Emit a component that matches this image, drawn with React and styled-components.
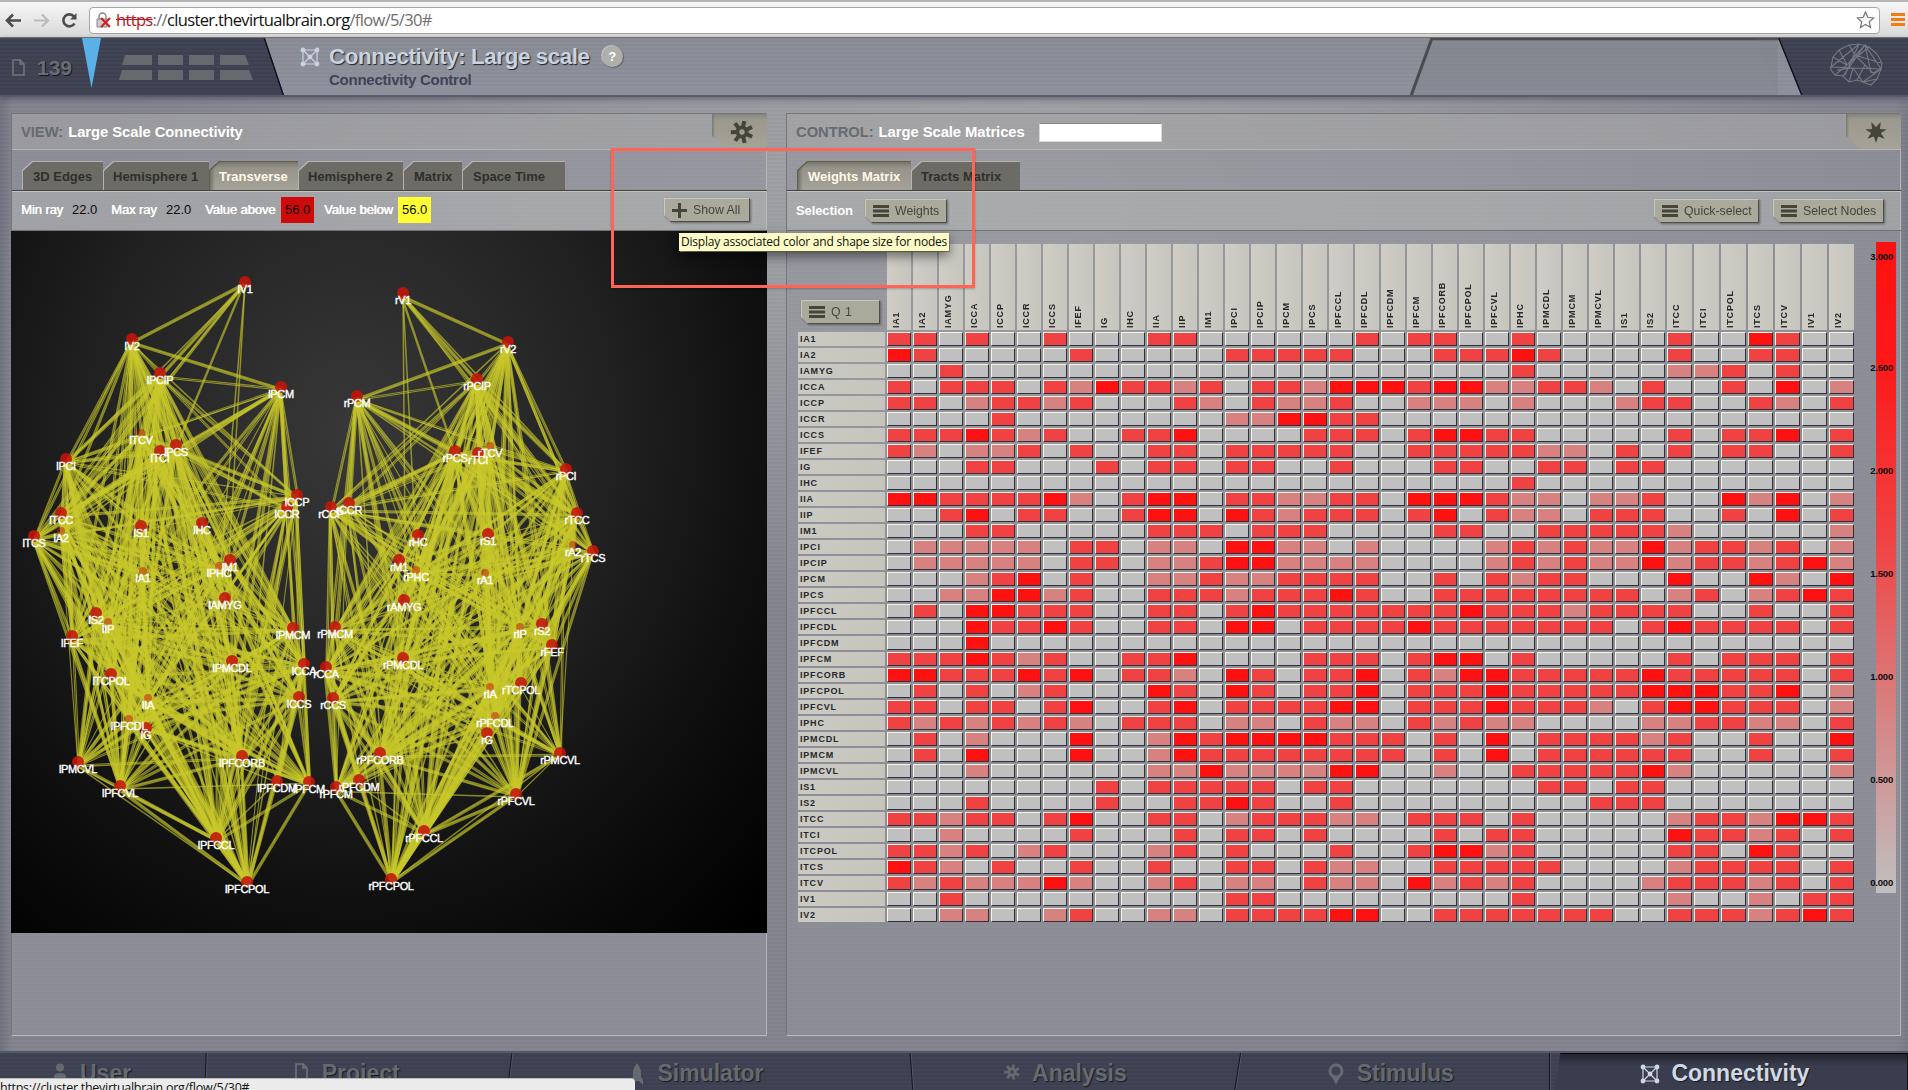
import React from "react";
import styled, { createGlobalStyle, css } from "styled-components";

const sans = '"Liberation Sans", Arial, sans-serif';
const lucida = '"Open Sans", "Noto Sans", sans-serif';
const stripes = "repeating-linear-gradient(180deg, rgba(255,255,255,.014) 0 2px, rgba(0,0,0,.014) 2px 4px)";
const darkFill = css`background: ${stripes}, #3e4152;`;

const Global = createGlobalStyle`
  * { box-sizing: border-box; }
  html, body { margin: 0; padding: 0; overflow: hidden; }
  body { font-family: ${sans}; background: #83848f; }
`;

/* ---------- data ---------- */

const NAMES = "A1 A2 AMYG CCA CCP CCR CCS FEF G HC IA IP M1 PCI PCIP PCM PCS PFCCL PFCDL PFCDM PFCM PFCORB PFCPOL PFCVL PHC PMCDL PMCM PMCVL S1 S2 TCC TCI TCPOL TCS TCV V1 V2".split(" ");

const WEIGHTS = [
  "2202002000220000002022002000002003200",
  "3200000200000222220002223200002002200",
  "0020000000000000000000002000001120200",
  "2022202132212022133323311221020020301",
  "2201221200021021120011101000122002102",
  "0000200000000113322000000000000000000",
  "2223212002230000222023322000002022302",
  "2101120200220222220022222110202022002",
  "0002200020220220020002200220220000000",
  "0000000000000000000000002000000000000",
  "3322223102330221122033321101120031301",
  "0023022002330321222023021102220020302",
  "0002200000222022200002200222221000001",
  "0111110220110331101000012121131221201",
  "0111110220112331111000012121131221231",
  "0001230200112112222002021220003003103",
  "0011331200222122232002222222201201232",
  "0203322200220232222222322212222002002",
  "0003223200220330222232222222023222202",
  "0003000000000000000000000000000000000",
  "2223212002230000222023302000002022202",
  "3322232302210320223021332222232222202",
  "0202012000320320223022232222233322301",
  "2202202300230222233022232221023322201",
  "2121212102220110211021211000011221102",
  "0201000300132333322202030222212002003",
  "0203000300132222222202030222222002002",
  "0001000000113111133001002222231000001",
  "0000000020222220220000000220220000000",
  "0002000020022320020000000002220000000",
  "2212202300220122211022202000001221332",
  "0010000200020220200002022000003221202",
  "2212012000120200020023312000002203200",
  "3210200200200220211002222200001222202",
  "2121113100120110211031212000012221202",
  "0020000000000220000000002000001001022",
  "0011001200110222233002222222002221232",
];

const LEVELS = ["#c0c0c0", "#d88181", "#f04242", "#ff1111"];

const LEFT = {
  V1: [245, 282], V2: [132, 339], PCIP: [160, 373], PCM: [281, 387], TCV: [141, 433], PCS: [176, 445],
  TCI: [160, 451], PCI: [66, 459], CCP: [297, 495], CCR: [287, 507], HC: [202, 523], TCC: [61, 513],
  S1: [141, 526], TCS: [34, 536], A2: [61, 531], M1: [230, 560], PHC: [219, 566], A1: [143, 571],
  AMYG: [225, 598], S2: [96, 613], IP: [108, 622], FEF: [72, 636], PMCM: [293, 628], PMCDL: [232, 661],
  CCA: [304, 664], TCPOL: [111, 674], IA: [148, 698], CCS: [299, 697], PFCDL: [129, 719], G: [146, 728],
  PFCORB: [242, 756], PMCVL: [78, 762], PFCVL: [120, 786], PFCDM: [277, 781], PFCM: [309, 782],
  PFCCL: [216, 838], PFCPOL: [247, 882],
};
const RIGHT = {
  V1: [403, 293], V2: [508, 342], PCIP: [477, 379], PCM: [357, 396], PCS: [455, 451], TCI: [478, 453],
  TCV: [490, 446], PCI: [566, 469], CCP: [331, 507], CCR: [349, 503], TCC: [577, 513], HC: [418, 535],
  S1: [488, 534], A2: [573, 545], TCS: [593, 551], M1: [399, 560], PHC: [416, 570], A1: [485, 573],
  AMYG: [404, 600], IP: [520, 627], S2: [542, 624], FEF: [552, 645], PMCM: [335, 627], PMCDL: [403, 658],
  CCA: [326, 667], TCPOL: [521, 683], IA: [490, 687], CCS: [333, 698], PFCDL: [495, 716], G: [487, 733],
  PFCORB: [380, 753], PMCVL: [560, 753], PFCVL: [516, 794], PFCDM: [359, 780], PFCM: [336, 787],
  PFCCL: [424, 831], PFCPOL: [391, 879],
};
const DEEP = ["A1", "IP", "IA", "PFCDL", "TCV", "PHC", "A2"];

/* ---------- browser chrome ---------- */

const Page = styled.div`
  position: relative;
  width: 1908px;
  height: 1090px;
  overflow: hidden;
  display: flex;
  flex-direction: column;
  background: ${stripes},
    linear-gradient(90deg, rgba(60,60,85,.25), rgba(0,0,0,0) 12px calc(100% - 12px), rgba(60,60,85,.12)),
    radial-gradient(ellipse 900px 420px at 1000px 200px, #a5a5a8 0%, #999aa0 40%, rgba(140,140,150,0) 100%),
    #82838d;
`;
const Chrome = styled.div`
  height: 38px;
  flex: none;
  display: flex;
  align-items: center;
  gap: 11px;
  padding: 3px 3px 2px 5px;
  border-top: 2px solid #b5b5b5;
  border-bottom: 1px solid #777;
  background: linear-gradient(#f6f6f6, #d9d9d9);
`;
const Address = styled.div`
  flex: 1;
  height: 27px;
  display: flex;
  align-items: center;
  padding: 0 4px 0 6px;
  background: #fff;
  border: 1px solid #a5a5a5;
  border-radius: 4px;
`;
const Url = styled.div`
  flex: 1;
  margin-left: 5px;
  font: 16.5px/24px ${lucida};
  letter-spacing: -.66px;
  color: #6e6e6e;
  white-space: pre;
  b { font-weight: 400; color: #111; }
  s { color: #b8151d; }
`;

/* ---------- app header ---------- */

const Header = styled.header`
  height: 59px;
  flex: none;
  display: flex;
  justify-content: space-between;
  background: ${stripes}, linear-gradient(#898b95, #8e919b);
  border-bottom: 2px solid #575a6b;
  box-shadow: 0 2px 6px rgba(50,50,75,.5);
`;
const HeaderSide = styled.div`
  ${darkFill}
  width: ${(p) => p.$w}px;
  display: flex;
  clip-path: ${(p) => (p.$right ? "polygon(0 0, 100% 0, 100% 100%, 23px 100%)" : "polygon(0 0, 265px 0, 284px 100%, 0 100%)")};
  position: relative;
  &::after {
    content: "";
    position: absolute;
    top: 0;
    width: 2px;
    height: 100%;
    background: #12131a;
    left: ${(p) => (p.$right ? 11 : 273)}px;
    transform: skewX(${(p) => (p.$right ? 22 : 18.5)}deg);
  }
`;
const Count = styled.div`
  margin: 18px 0 0 12px;
  font: bold 21px/24px ${sans};
  color: #676d70;
  text-shadow: 1px 1px 0 #17181f;
  width: 45px;
`;
const TitleBlock = styled.div`
  flex: 1;
  display: flex;
  padding: 4px 0 0 15px;
`;
const Title = styled.h1`
  margin: 0;
  height: 28px;
  padding-top: 1px;
  display: flex;
  align-items: center;
  font: bold 22.3px/27px ${sans};
  color: #c7d3df;
  text-shadow: 1px 1px 1px #23242f;
  letter-spacing: -.38px;
  white-space: nowrap;
`;
const Subtitle = styled.div`
  margin-top: 0;
  font: bold 15px/19px ${sans};
  letter-spacing: -.25px;
  color: #41425a;
`;
const Help = styled.span`
  width: 21px;
  height: 21px;
  margin: 0 0 1px 12px;
  border-radius: 50%;
  background: #b0afac;
  color: #fff;
  font: bold 13px/21px ${sans};
  text-align: center;
  text-shadow: none;
  box-shadow: 1px 1px 1px #62646c, -1px -1px 0 #bfc0c1;
`;
const LogoBox = styled.div`
  padding: 5px 0 0 51px;
`;

/* ---------- panels ---------- */

const Main = styled.main`
  flex: 1;
  min-height: 0;
  display: flex;
  gap: 19px;
  padding: 16px 6px 15px 11px;
`;
const Panel = styled.section`
  width: ${(p) => p.$w}px;
  display: flex;
  flex-direction: column;
  border: 1px solid #74767e;
  border-right: 1px solid #b5b5b2;
  border-bottom: 1px solid #b9bab5;
  background: ${stripes}, rgba(148,149,158,.6);
`;
const PanelHead = styled.div`
  height: 36px;
  flex: none;
  display: flex;
  justify-content: space-between;
  background: rgba(190,191,180,.28);
  border-bottom: 1px solid #b5b6b4;
  margin-right: -1px;
`;
const PanelTitle = styled.h2`
  margin: 0;
  padding-left: 9px;
  display: flex;
  align-items: center;
  gap: 5px;
  font: bold 14.8px/36px ${sans};
  letter-spacing: -.06px;
  color: #fff;
  span { color: #666b70; font-weight: 700; }
`;
const Search = styled.input`
  width: 123px;
  height: 19px;
  margin: 1px 0 0 9px;
  background: #fff;
  border: 1px solid #d8d8d8;
  border-top-color: #888;
  padding: 0;
`;
const CornerTab = styled.div`
  width: 55px;
  height: 35px;
  padding: 5px 0 0 17px;
  background: linear-gradient(90deg, #77776a, rgba(0,0,0,0) 3px), linear-gradient(#85847a, #9b988e 5px, #a5a298);
  clip-path: polygon(0 0, 100% 0, 100% 100%, 15px 100%, 0 22px);
`;
const TabRow = styled.div`
  height: 41px;
  flex: none;
  display: flex;
  align-items: flex-end;
  padding-left: 10px;
  margin-right: -1px;
  border-bottom: 1px solid #42433f;
`;
const Tab = styled.div`
  width: ${(p) => p.$w}px;
  height: 29px;
  position: relative;
  z-index: 0;
  padding: 1px 0 0 ${(p) => p.$pad || 10}px;
  font: bold 13px/29px ${sans};
  white-space: nowrap;
  color: ${(p) => (p.$on ? "#fdf9e6" : "#2f302a")};
  background: ${(p) => (p.$on ? "#60604f" : "#b4b4ae")};
  clip-path: polygon(0 9px, 10px 0, 100% 0, 100% 100%, 0 100%);
  &::before {
    content: "";
    position: absolute;
    z-index: -1;
    inset: 1px 0 0 1px;
    clip-path: polygon(0 9px, 10px 0, 100% 0, 100% 100%, 0 100%);
    background: ${(p) => (p.$on ? "linear-gradient(90deg, rgba(70,70,55,.5), rgba(0,0,0,0) 5px), linear-gradient(#78766a, #96948a 6px, #a5a399)" : "#6c6b65")};
  }
`;
const ToolRow = styled.div`
  height: 40px;
  flex: none;
  display: flex;
  align-items: center;
  margin-right: -1px;
  padding: ${(p) => p.$pad};
  font: 13px/16px ${sans};
  color: #fff;
  white-space: nowrap;
  background: rgba(198,200,190,.36);
  border-top: 1px solid #c3c4c0;
  border-bottom: 1px solid #707274;
`;
const RayName = styled.span`
  text-shadow: .6px 0 0 #fff;
  letter-spacing: -.1px;
  width: ${(p) => p.$w}px;
`;
const RayValue = styled.span`
  width: ${(p) => p.$w}px;
  height: 26px;
  line-height: 26px;
  padding-left: 4px;
  margin-right: ${(p) => p.$gap}px;
  color: #0a0a0a;
  background: ${(p) => p.$bg || "transparent"};
`;
const SelectionName = styled.span`
  width: 69px;
  font-weight: bold;
  letter-spacing: -.1px;
`;
const Spacer = styled.div`flex: 1;`;
const ButtonShell = styled.span`
  filter: drop-shadow(1px 1px 1px rgba(50,50,50,.55));
  margin-left: ${(p) => p.$gap || 0}px;
  display: block;
`;
const ButtonFace = styled.span`
  display: flex;
  align-items: center;
  gap: 6px;
  width: ${(p) => p.$w}px;
  height: 24px;
  padding-left: 7px;
  font: 12.3px/24px ${sans};
  letter-spacing: ${(p) => p.$ls || 0}px;
  color: #45453c;
  background: #a9a99c;
  border: 1px solid #c9c9c0;
  border-right-color: #4e4e46;
  border-bottom-color: #4e4e46;
  clip-path: polygon(0 0, 100% 0, 100% 100%, 7px 100%, 0 17px);
`;

/* ---------- connectivity view ---------- */

const Viewport = styled.div`
  height: 702px;
  margin: 0 -1px 0 -1px;
  flex: none;
  background: radial-gradient(ellipse 560px 640px at 340px 200px, #383838 0%, #222 45%, #0f0f0f 75%, #000 105%);
  svg { display: block; }
  text { font: 11px ${sans}; fill: #fff; stroke: #fff; stroke-width: .4px; letter-spacing: -.35px; text-anchor: middle; }
`;

/* ---------- matrix ---------- */

const MatrixArea = styled.div`
  display: flex;
  padding: 13px 0 0 11px;
`;
const Matrix = styled.div`
  display: grid;
  grid-template-columns: 87px repeat(30, 24px) repeat(7, 25px);
  grid-template-rows: 86px repeat(37, 14px);
  gap: 2px;
  font: bold 9px/14px ${sans};
  letter-spacing: .8px;
  color: #26272b;
`;
const Quick = styled.div`
  display: flex;
  align-items: flex-end;
  padding: 0 0 6px 3px;
`;
const ColHead = styled.div`
  writing-mode: vertical-rl;
  transform: rotate(180deg);
  padding: 2px 0 0 6px;
  line-height: 18px;
  background: linear-gradient(90deg, #c6c5be, #cfcdc4);
`;
const RowHead = styled.div`
  padding-left: 2px;
  background: linear-gradient(90deg, #cbcac2, #c5c5be);
`;
const Cell = styled.div`
  background: ${(p) => LEVELS[p.$v]};
  border: 1px solid #f8f5e2;
  border-right-color: #303038;
  border-bottom-color: #303038;
`;
const Scale = styled.div`
  width: 20px;
  height: 651px;
  margin: -2px 0 0 22px;
  position: relative;
  background: linear-gradient(#ff1111 0%, #ff1818 18%, #f04242 45%, #d88181 72%, #c0c0c0 100%);
`;
const Mark = styled.span`
  position: absolute;
  right: 3px;
  top: ${(p) => p.$y}px;
  font: bold 9.5px/12px ${sans};
  letter-spacing: -.2px;
  color: #0c0c0c;
`;

/* ---------- footer & overlays ---------- */

const Footer = styled.footer`
  height: 39px;
  flex: none;
  display: flex;
  ${darkFill}
  border-top: 2px solid #565968;
  position: relative;
`;
const FootItem = styled.div`
  width: ${(p) => p.$w}px;
  padding-left: ${(p) => p.$pad}px;
  display: flex;
  gap: ${(p) => p.$gap || 14}px;
  font: bold 23px/40px ${sans};
  color: ${(p) => (p.$on ? "#cfdae4" : "#646b70")};
  text-shadow: 1px 1px 1px #191a22;
  position: relative;
  svg { flex: none; margin-top: 10px; }
  ${(p) => p.$on && css`
    background: linear-gradient(#22242e, #3a3d4d 12px);
    border-top: 1px solid #050505;
    clip-path: polygon(10px 0, 100% 0, 100% 100%, 4px 100%);
    line-height: 38px;
  `}
  &::after {
    content: "";
    position: absolute;
    right: 0;
    top: 0;
    height: 39px;
    width: 1px;
    background: #15161d;
    box-shadow: 1px 0 0 #55586a;
    transform: skewX(${(p) => p.$skew || 0}deg);
  }
`;
const Status = styled.div`
  position: absolute;
  left: 0;
  bottom: 0;
  width: 635px;
  height: 12px;
  overflow: hidden;
  background: #ebebeb;
  border-top: 1px solid #bbb;
  border-top-right-radius: 4px;
  font: 12.5px/18px ${lucida};
  letter-spacing: -.28px;
  color: #111;
`;
const Highlight = styled.div`
  position: absolute;
  left: 611px;
  top: 148px;
  width: 364px;
  height: 140px;
  border: 3px solid #ff6456;
  box-shadow: 0 1px 2px rgba(0,0,0,.25);
`;
const Tooltip = styled.div`
  position: absolute;
  left: 679px;
  top: 233px;
  width: 270px;
  height: 18px;
  padding-left: 2px;
  background: #fcfbc6;
  box-shadow: 0 5px 12px rgba(0,0,0,.5), 1px 1px 0 #8f8f7a;
  font: 12px/18px ${lucida};
  letter-spacing: -.21px;
  color: #111;
  white-space: nowrap;
`;

/* ---------- drawings ---------- */

const Lines = () => (
  <svg width="16" height="12" viewBox="0 0 16 12" fill="#45453a"><path d="M0 0h16v3H0zM0 4.5h16v3H0zM0 9h16v3H0z" /></svg>
);
const Plus = () => (
  <svg width="15" height="15" viewBox="0 0 15 15" fill="#45453a"><path d="M6 0h3v6h6v3H9v6H6V9H0V6h6z" /></svg>
);
const NetIcon = ({ color, size = 20 }) => (
  <svg width={size} height={size} viewBox="0 0 20 20" stroke={color} fill={color} strokeWidth="1.2">
    <path d="M3 3h14v14H3zM3 3l14 14M17 3L3 17" fill="none" />
    <circle cx="3" cy="3" r="1.8" /><circle cx="17" cy="3" r="1.8" /><circle cx="3" cy="17" r="1.8" /><circle cx="17" cy="17" r="1.8" /><circle cx="10" cy="10" r="1.8" />
  </svg>
);
const Doc = () => (
  <svg width="13" height="17" viewBox="0 0 13 17" fill="none" stroke="#6f7475" strokeWidth="1.6"><path d="M1 1h7l4 4v11H1zM8 1v4h4" /></svg>
);
const burst = (n, R, r, c, off = 0) =>
  Array.from({ length: n * 2 }, (_, i) => {
    const a = (Math.PI * i) / n - Math.PI / 2 + off;
    const d = i % 2 ? r : R;
    return `${(c + d * Math.cos(a)).toFixed(2)},${(c + d * Math.sin(a)).toFixed(2)}`;
  }).join(" ");
const Gear = ({ color, size = 26 }) => (
  <svg width={size} height={size} viewBox="0 0 26 26" stroke={color}>
    {[0, 1, 2, 3, 4, 5, 6].map((i) => (
      <line key={i} x1="13" y1="7.5" x2="13" y2="1.8" strokeWidth="4" transform={`rotate(${i * 51.43 + 12} 13 13)`} />
    ))}
    <circle cx="13" cy="13" r="4.6" fill="none" strokeWidth="3.8" />
  </svg>
);
const Star7 = () => (
  <svg width="26" height="26" viewBox="0 0 26 26" fill="#45453a"><polygon points={burst(7, 11, 5, 13, Math.PI)} /></svg>
);
const BrainLogo = () => (
  <svg width="54" height="44" viewBox="0 0 54 44" fill="none" stroke="#747980" strokeWidth="1.1">
    <path d="M2 24L4 14 10 7 20 2 30 1 40 4 48 11 53 20 52 26 48 36 42 42 34 39 28 37 20 39 14 33 6 32 2 27z" />
    <path d="M10 7L18 22 36 2 52 26 24 25 2 24 30 1 16 32M20 2L26 12 52 20M48 11M4 14l14 8 22-18M6 32l12-10 8-10 18 18 8-4M14 33L36 2l6 28M24 25l10 14 18-13M20 39l4-14-16 2M28 37l8-15M34 39l14-3" />
  </svg>
);
const Grid = () => (
  <svg width="136" height="57" viewBox="0 0 136 57">
    <path d="M9 0h19l-9.5 50z" fill="#59b1e6" />
    <g fill="#646b6e">
      <path d="M52 17h27v10H49zM85 17h25v10H85zM116 17h25v10H116zM147 17h25l4 10h-29zM49 32h30v10H46z" />
      <path d="M85 32h25v10H85zM116 32h25v10H116zM147 32h29l4 10h-33z" />
    </g>
  </svg>
);

function Hemisphere({ side, nodes }) {
  const edges = [];
  NAMES.forEach((a, i) =>
    NAMES.forEach((b, j) => {
      const w = +WEIGHTS[i][j];
      if (i === j || !w) return;
      const [x1, y1] = nodes[a], [x2, y2] = nodes[b];
      const len = Math.hypot(x2 - x1, y2 - y1);
      const ox = ((y2 - y1) / len) * 1.5, oy = (-(x2 - x1) / len) * 1.5;
      edges.push(
        <line key={a + b} x1={x1} y1={y1 + 3} x2={x2 + ox} y2={y2 + oy + 3} strokeWidth={[0, 1.1, 1.5, 2.4][w]} />
      );
    })
  );
  return (
    <g>
      <g stroke="#c9c92c" strokeOpacity=".64">{edges}</g>
      {NAMES.map((n) => (
        <ellipse key={n} cx={nodes[n][0]} cy={nodes[n][1]} rx={DEEP.includes(n) ? 4 : 6} ry={DEEP.includes(n) ? 4 : 6} fill="#c41509" fillOpacity={DEEP.includes(n) ? 0.5 : 0.88} />
      ))}
      {NAMES.map((n) => (
        <text key={n} x={nodes[n][0]} y={nodes[n][1] + 11}>{side + n}</text>
      ))}
    </g>
  );
}

function Button({ w, icon, gap, ls, children }) {
  return (
    <ButtonShell $gap={gap}>
      <ButtonFace $w={w} $ls={ls}>{icon}{children}</ButtonFace>
    </ButtonShell>
  );
}

const MARKS = [["3.000", 9], ["2.500", 120], ["2.000", 223], ["1.500", 326], ["1.000", 429], ["0.500", 532], ["0.000", 635]];

const HeaderLeft = styled(HeaderSide)`
  > svg:first-child { margin: 21px 0 0 12px; }
`;
const GridBox = styled.div`
  width: 190px;
  margin-left: -9px;
  svg { overflow: visible; }
`;
const TitleIcon = styled.div`
  width: 29px;
  padding-top: 5px;
`;

export default function App() {
  return (
    <Page>
      <Global />
      <Chrome>
        <svg width="17" height="17" viewBox="0 0 17 17" fill="none" stroke="#4c4c4c" strokeWidth="2.6"><path d="M16 8.5H2M8 2.5l-6 6 6 6" /></svg>
        <svg width="17" height="17" viewBox="0 0 17 17" fill="none" stroke="#bcbcbc" strokeWidth="2.2"><path d="M1 8.5h14M9 2.5l6 6-6 6" /></svg>
        <svg width="17" height="17" viewBox="0 0 17 17" fill="none" stroke="#4c4c4c" strokeWidth="2.6"><path d="M13.5 11.5a6 6 0 1 1-.5-7" /><path d="M15.5 1v6.5H9z" fill="#4c4c4c" stroke="none" /></svg>
        <Address>
          <svg width="15" height="17" viewBox="0 0 15 17"><path d="M3 8V4.5a3.5 3.5 0 0 1 7 0V8" fill="none" stroke="#8a8a8a" strokeWidth="1.5" /><path d="M1 7h10v8H1z" fill="#ccc" stroke="#888" /><path d="M5 6l9 9M14 6l-9 9" stroke="#d21f1f" strokeWidth="2.2" /></svg>
          <Url><s>https</s>://<b>cluster.thevirtualbrain.org</b>/flow/5/30#</Url>
          <svg width="19" height="19" viewBox="0 0 20 20" fill="none" stroke="#777" strokeWidth="1.3"><polygon points={burst(5, 9, 4.2, 10)} /></svg>
        </Address>
        <svg width="14" height="14" viewBox="0 0 14 14" fill="#f07d14"><path d="M0 0h14v3H0zM0 5h14v3H0zM0 10h14v3H0z" /></svg>
      </Chrome>

      <Header>
        <HeaderLeft $w={285}>
          <Doc />
          <Count>139</Count>
          <GridBox><Grid /></GridBox>
        </HeaderLeft>
        <TitleBlock>
          <TitleIcon><NetIcon color="#c7d3df" size={20} /></TitleIcon>
          <div>
            <Title>Connectivity: Large scale<Help>?</Help></Title>
            <Subtitle>Connectivity Control</Subtitle>
          </div>
        </TitleBlock>
        <svg width="369" height="57" viewBox="0 0 369 57">
          <path d="M23 0h346v57H2z" fill="#7e8089" fillOpacity=".45" />
          <path d="M24 1h345" stroke="#4a4b4f" strokeWidth="2.5" />
          <path d="M23 0L2 58" stroke="#4a4b4f" strokeWidth="3" />
          <path d="M346 0h23v57z" fill="#7e8089" fillOpacity=".1" />
        </svg>
        <HeaderSide $w={130} $right><LogoBox><BrainLogo /></LogoBox></HeaderSide>
      </Header>

      <Main>
        <Panel $w={756}>
          <PanelHead>
            <PanelTitle><span>VIEW:</span>Large Scale Connectivity</PanelTitle>
            <CornerTab><Gear color="#45453a" /></CornerTab>
          </PanelHead>
          <TabRow>
            <Tab $w={81} $pad={11}>3D Edges</Tab>
            <Tab $w={106}>Hemisphere 1</Tab>
            <Tab $w={89} $on>Transverse</Tab>
            <Tab $w={105}>Hemisphere 2</Tab>
            <Tab $w={59} $pad={11}>Matrix</Tab>
            <Tab $w={103} $pad={11}>Space Time</Tab>
          </TabRow>
          <ToolRow $pad="0 17px 2px 9px">
            <RayName $w={47}>Min ray</RayName><RayValue $w={33} $gap={10}>22.0</RayValue>
            <RayName $w={51}>Max ray</RayName><RayValue $w={33} $gap={10}>22.0</RayValue>
            <RayName $w={76}>Value above</RayName><RayValue $w={33} $gap={10} $bg="#cf0a0a">56.0</RayValue>
            <RayName $w={74}>Value below</RayName><RayValue $w={33} $gap={0} $bg="#ffff33">56.0</RayValue>
            <Spacer />
            <Button w={86} icon={<Plus />}>Show All</Button>
          </ToolRow>
          <Viewport>
            <svg width="756" height="702" viewBox="11 231 756 702">
              <Hemisphere side="l" nodes={LEFT} />
              <Hemisphere side="r" nodes={RIGHT} />
            </svg>
          </Viewport>
        </Panel>

        <Panel $w={1115}>
          <PanelHead>
            <PanelTitle><span>CONTROL:</span>Large Scale Matrices<Search /></PanelTitle>
            <CornerTab><Star7 /></CornerTab>
          </PanelHead>
          <TabRow>
            <Tab $w={114} $pad={11} $on>Weights Matrix</Tab>
            <Tab $w={109}>Tracts Matrix</Tab>
          </TabRow>
          <ToolRow $pad="0 17px 0 9px">
            <SelectionName>Selection</SelectionName>
            <Button w={82} icon={<Lines />}>Weights</Button>
            <Spacer />
            <Button w={105} icon={<Lines />}>Quick-select</Button>
            <Button w={111} icon={<Lines />} gap={14}>Select Nodes</Button>
          </ToolRow>
          <MatrixArea>
            <Matrix>
              <Quick><Button w={79} icon={<Lines />} ls={0.5}>Q 1</Button></Quick>
              {NAMES.map((n) => <ColHead key={n}>I{n}</ColHead>)}
              {NAMES.map((n, r) => (
                <React.Fragment key={n}>
                  <RowHead>I{n}</RowHead>
                  {[...WEIGHTS[r]].map((v, c) => <Cell key={c} $v={v} />)}
                </React.Fragment>
              ))}
            </Matrix>
            <Scale>
              {MARKS.map(([t, y]) => <Mark key={t} $y={y}>{t}</Mark>)}
            </Scale>
          </MatrixArea>
        </Panel>
      </Main>

      <Footer>
        <FootItem $w={206} $pad={54} $skew={-2}>
          <svg width="12" height="24" viewBox="0 0 12 24" fill="#646b70"><circle cx="6" cy="4.5" r="4" /><path d="M0 24V14q0-4 6-4t6 4v10z" /></svg>User
        </FootItem>
        <FootItem $w={305} $pad={89} $gap={14} $skew={-7}><Doc />Project</FootItem>
        <FootItem $w={402} $pad={121} $skew={4}>
          <svg width="12" height="22" viewBox="0 0 12 22" fill="#646b70"><path d="M6 0q5 6 4 14l2 3v5l-4-4H4l-4 4v-5l2-3Q1 6 6 0z" /></svg>Simulator
        </FootItem>
        <FootItem $w={326} $pad={91} $gap={11} $skew={-9}><Gear color="#646b70" size={18} />Analysis</FootItem>
        <FootItem $w={313} $pad={90} $gap={13}>
          <svg width="16" height="23" viewBox="0 0 16 23" fill="none" stroke="#646b70" strokeWidth="3"><circle cx="8" cy="8" r="6" /><path d="M8 22l-4-8h8z" fill="#646b70" stroke="none" /></svg>Stimulus
        </FootItem>
        <FootItem $w={358} $pad={90} $gap={11} $on><NetIcon color="#cfdae4" size={20} />Connectivity</FootItem>
      </Footer>

      <Highlight />
      <Tooltip>Display associated color and shape size for nodes</Tooltip>
      <Status>https://cluster.thevirtualbrain.org/flow/5/30#</Status>
    </Page>
  );
}
